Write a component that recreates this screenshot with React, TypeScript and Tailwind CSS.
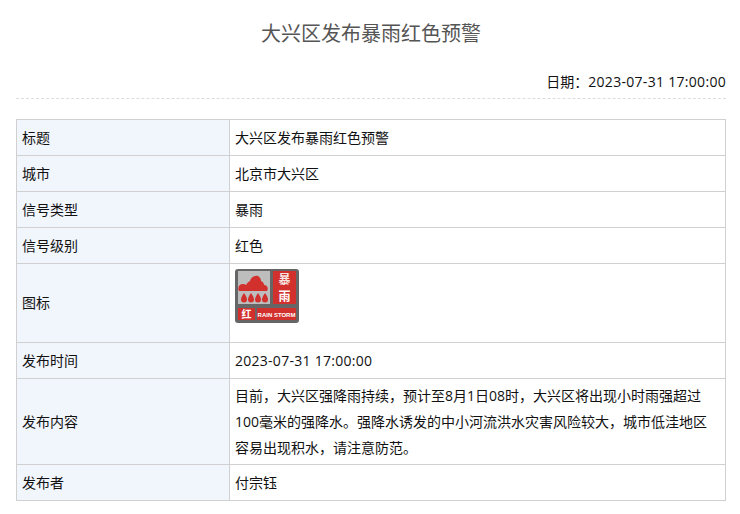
const rows: { label: string; value: string; cls: string }[] = [
  { label: '标题', value: '大兴区发布暴雨红色预警', cls: 'h-9' },
  { label: '城市', value: '北京市大兴区', cls: 'h-9' },
  { label: '信号类型', value: '暴雨', cls: 'h-9' },
  { label: '信号级别', value: '红色', cls: 'h-9' },
  { label: '图标', value: 'icon', cls: 'h-[79px]' },
  { label: '发布时间', value: '2023-07-31 17:00:00', cls: 'h-9' },
  {
    label: '发布内容',
    value:
      '目前，大兴区强降雨持续，预计至8月1日08时，大兴区将出现小时雨强超过100毫米的强降水。强降水诱发的中小河流洪水灾害风险较大，城市低洼地区容易出现积水，请注意防范。',
    cls: 'h-[86px]',
  },
  { label: '发布者', value: '付宗钰', cls: 'h-9' },
]

function RainIcon() {
  return (
    <svg width="64" height="54" viewBox="0 0 64 54" className="block mt-[5px] mb-[19px]">
      <rect x="0" y="0" width="64" height="54" rx="3" fill="#666" />
      <rect x="3" y="2" width="32" height="33" fill="#bdbdbd" />
      <path
        d="M4 22c-2-3 0-7 4-7 1 0 2 0 3 1 1-2 2-3 4-4 1-4 5-6 8-5 2 1 3 3 3 5 2 1 3 2 3 4 3 0 5 3 3 6z"
        fill="#d2302c"
      />
      {[9, 16, 23, 30].map((x) => (
        <path key={x} d={`M${x} 24c-2 3-3 5-3 6.500a3 3 0 0 0 6 0c0-1.500-1-3.500-3-6.500z`} fill="#d2302c" />
      ))}
      <rect x="38" y="2" width="23" height="33" fill="#d2302c" />
      <text x="49.5" y="15" textAnchor="middle" fontSize="12" fontWeight="700" fill="#f7e4e1" fontFamily="'Noto Sans CJK SC', sans-serif">
        暴
      </text>
      <text x="49.5" y="32" textAnchor="middle" fontSize="12" fontWeight="700" fill="#fff" fontFamily="'Noto Sans CJK SC', sans-serif">
        雨
      </text>
      <rect x="3" y="39" width="17" height="12" fill="#d2302c" />
      <text x="11.500" y="49" textAnchor="middle" fontSize="10" fontWeight="700" fill="#fff" fontFamily="'Noto Sans CJK SC', sans-serif">
        红
      </text>
      <rect x="22" y="39" width="39" height="12" fill="#d2302c" />
      <text x="41.500" y="47.500" textAnchor="middle" fontSize="6" fontWeight="700" fill="#fff" fontFamily="'Liberation Sans', sans-serif">
        RAIN STORM
      </text>
    </svg>
  )
}

export default function App() {
  return (
    <div className="bg-white w-[740px] h-[514px] overflow-hidden pl-4 pr-[14px] font-['Open_Sans','Noto_Sans_CJK_SC',sans-serif] text-sm text-[#111]">
      <h1 className="pt-[18px] h-[62px] text-center text-xl font-normal leading-[30px] text-[#555] font-['Noto_Sans_CJK_SC',sans-serif]">
        大兴区发布暴雨红色预警
      </h1>
      <div className="h-[37px] border-b border-dashed border-[#ddd] pt-[10px] text-right leading-5">
        日期：<span className="tracking-[0.3px]">2023-07-31 17:00:00</span>
      </div>
      <table className="mt-5 w-[710px] table-fixed border-collapse">
        <colgroup>
          <col className="w-[213px]" />
          <col />
        </colgroup>
        <tbody>
          {rows.map((row) => (
            <tr key={row.label} className={row.cls}>
              <td className="border border-[#d0d0d0] bg-[#f1f5fc] px-[5px] py-0 align-middle">{row.label}</td>
              <td className="border border-[#d0d0d0] pl-[5px] pr-[6px] py-0 align-middle leading-[26px]">
                {row.value === 'icon' ? (
                  <RainIcon />
                ) : row.label === '发布时间' ? (
                  <span className="tracking-[0.27px]">{row.value}</span>
                ) : (
                  row.value
                )}
              </td>
            </tr>
          ))}
        </tbody>
      </table>
    </div>
  )
}
